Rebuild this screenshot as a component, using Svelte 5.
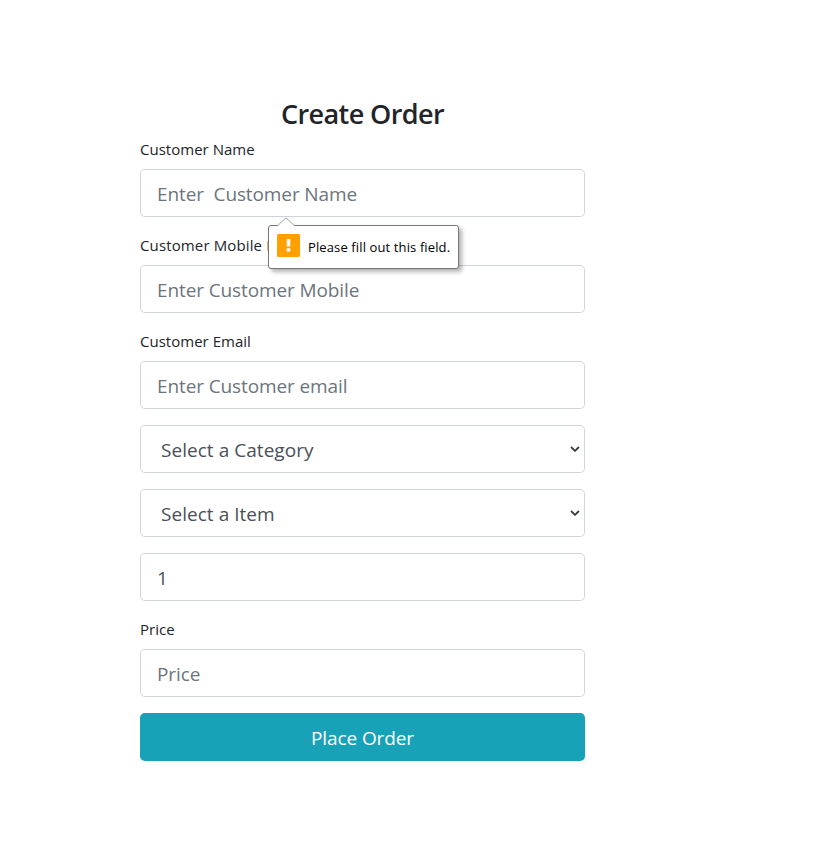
<script>
  let name = $state('');
  let mobile = $state('');
  let email = $state('');
  let quantity = $state('1');
  let price = $state('');
</script>

{#snippet picker(text)}
  <div class="group">
    <button type="button" class="control select">
      <span>{text}</span>
      <svg width="10" height="6" viewBox="0 0 10 6" aria-hidden="true">
        <path d="M1 1 L5 4.8 L9 1" fill="none" stroke="#343a40" stroke-width="1.8" />
      </svg>
    </button>
  </div>
{/snippet}

<main>
  <form onsubmit={(e) => e.preventDefault()}>
    <h3>Create Order</h3>
    <div class="group anchor">
      <label for="name">Customer Name</label>
      <input id="name" class="control name" placeholder="Enter  Customer Name" bind:value={name} />
      <div class="bubble" role="alert">
        <svg class="arrow" width="20" height="10" viewBox="0 0 20 10" aria-hidden="true">
          <path d="M1.5 9 L10 0.8 L18.5 9 V10 H1.5Z" fill="#fff" />
          <path d="M1.5 8.7 L10 0.8 L18.5 8.7" fill="none" stroke="#a0a0a0" />
        </svg>
        <svg class="warn" width="23" height="23" viewBox="0 0 23 23" aria-hidden="true">
          <rect width="23" height="23" rx="1.5" fill="#ffa000" />
          <path d="M9.7 5 H13.3 V12.6 H9.7Z M9.7 14.2 H13.3 V17.6 H9.7Z" fill="#fff" />
        </svg>
        <span>Please fill out this field.</span>
      </div>
    </div>
    <div class="group">
      <label for="mobile" class="wide">Customer Mobile No</label>
      <input id="mobile" class="control" placeholder="Enter Customer Mobile" bind:value={mobile} />
    </div>
    <div class="group">
      <label for="email">Customer Email</label>
      <input id="email" class="control" placeholder="Enter Customer email" bind:value={email} />
    </div>
    {@render picker('Select a Category')}
    {@render picker('Select a Item')}
    <div class="group">
      <input class="control" aria-label="Quantity" bind:value={quantity} />
    </div>
    <div class="group">
      <label for="price">Price</label>
      <input id="price" class="control" placeholder="Price" bind:value={price} />
    </div>
    <button class="submit" type="submit">Place Order</button>
  </form>
</main>

<style>
  :global(body) {
    margin: 0;
    background: #fff;
  }
  main {
    box-sizing: border-box;
    height: 853px;
    padding: 97px 0 0 140px;
    font-family: 'Open Sans', 'Noto Sans', sans-serif;
    color: #212529;
    overflow: hidden;
  }
  form {
    width: 445px;
  }
  h3 {
    margin: 0 0 6px;
    height: 34px;
    font-size: 27px;
    line-height: 34px;
    font-weight: 600;
    letter-spacing: -0.6px;
    text-align: center;
  }
  .group {
    margin-bottom: 16px;
  }
  label {
    display: block;
    width: fit-content;
    height: 24px;
    margin-bottom: 8px;
    font-size: 15px;
    line-height: 24px;
    letter-spacing: 0.02px;
    color: #212529;
  }
  label.wide {
    letter-spacing: 0.13px;
  }
  .control {
    box-sizing: border-box;
    display: block;
    width: 100%;
    height: 48px;
    margin: 0;
    padding: 9px 16px 7px;
    border: 1px solid #ced4da;
    border-radius: 4.8px;
    background: #fff;
    color: #495057;
    font-family: inherit;
    font-size: 19px;
    line-height: 30px;
    letter-spacing: -0.11px;
    outline: none;
  }
  .control::placeholder {
    color: #6c757d;
    opacity: 1;
  }
  .select {
    display: flex;
    align-items: center;
    justify-content: space-between;
    padding: 9px 4px 7px 20px;
    text-align: left;
    letter-spacing: 0.04px;
  }
  .select svg {
    margin-top: -2px;
  }
  .anchor {
    position: relative;
  }
  .bubble {
    position: absolute;
    z-index: 1;
    left: 128px;
    top: 88px;
    box-sizing: border-box;
    display: flex;
    align-items: center;
    width: 191px;
    height: 44px;
    padding: 0 0 0 8px;
    border: 1px solid #767676;
    border-radius: 3px;
    background: #fff;
    box-shadow: 3px 3px 4px rgba(0, 0, 0, 0.3);
    color: #000;
    font-size: 13px;
    letter-spacing: 0.12px;
    white-space: nowrap;
  }
  .bubble .arrow {
    position: absolute;
    left: 7px;
    top: -9px;
  }
  .warn {
    flex: none;
    margin: -3px 8px 0 0;
  }
  .submit {
    display: block;
    width: 100%;
    height: 48px;
    padding: 2px 0 0;
    border: 0;
    border-radius: 4.8px;
    background: #17a2b8;
    color: #fff;
    font-family: inherit;
    font-size: 19px;
    line-height: 30px;
    letter-spacing: -0.1px;
  }
</style>
